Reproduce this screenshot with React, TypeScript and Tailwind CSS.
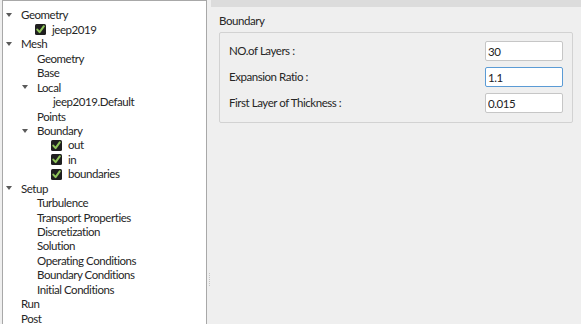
import React from "react";

type Row = {
  label: string;
  level: number;
  arrow?: boolean;
  checked?: boolean;
};

const rows: Row[] = [
  { label: "Geometry", level: 0, arrow: true },
  { label: "jeep2019", level: 1, checked: true },
  { label: "Mesh", level: 0, arrow: true },
  { label: "Geometry", level: 1 },
  { label: "Base", level: 1 },
  { label: "Local", level: 1, arrow: true },
  { label: "jeep2019.Default", level: 2 },
  { label: "Points", level: 1 },
  { label: "Boundary", level: 1, arrow: true },
  { label: "out", level: 2, checked: true },
  { label: "in", level: 2, checked: true },
  { label: "boundaries", level: 2, checked: true },
  { label: "Setup", level: 0, arrow: true },
  { label: "Turbulence", level: 1 },
  { label: "Transport Properties", level: 1 },
  { label: "Discretization", level: 1 },
  { label: "Solution", level: 1 },
  { label: "Operating Conditions", level: 1 },
  { label: "Boundary Conditions", level: 1 },
  { label: "Initial Conditions", level: 1 },
  { label: "Run", level: 0 },
  { label: "Post", level: 0 },
];

const indent = ["w-0", "w-[16px]", "w-[32px]"];

function CheckIcon() {
  return (
    <svg width="11" height="11" viewBox="0 0 11 11" className="shrink-0">
      <rect x="0" y="0" width="11" height="11" rx="1.5" fill="#1f1f1f" />
      <path d="M2.3 5.6 L4.6 8.1 L8.9 2.2" fill="none" stroke="#8fc55a" strokeWidth="2" strokeLinecap="round" strokeLinejoin="round" />
    </svg>
  );
}

function Arrow() {
  return (
    <svg width="6" height="4" viewBox="0 0 6 4">
      <path d="M0 0 L6 0 L3 4 Z" fill="#5a5a5a" />
    </svg>
  );
}

function TreeRow({ row }: { row: Row }) {
  if (row.checked) {
    return (
      <div className="flex items-center h-[14.45px]">
        <div className={indent[row.level]} />
        <div className="w-[16px] shrink-0" />
        <CheckIcon />
        <span className="ml-[6px]">{row.label}</span>
      </div>
    );
  }
  return (
    <div className="flex items-center h-[14.45px]">
      <div className={indent[row.level]} />
      <div className="w-[18px] shrink-0 flex items-center pl-[3px]">{row.arrow && <Arrow />}</div>
      <span>{row.label}</span>
    </div>
  );
}

function Field({ label, value, focused }: { label: string; value: string; focused?: boolean }) {
  return (
    <div className="flex items-center justify-between h-[20px]">
      <span>{label}</span>
      <input
        readOnly
        value={value}
        className={
          focused
            ? "w-[78px] h-[20px] bg-white border border-[#5b9bd5] rounded-[2px] px-[2px] text-[#222] outline-none"
            : "w-[78px] h-[20px] bg-white border border-[#c6c6c6] rounded-[2px] px-[2px] text-[#222] outline-none"
        }
      />
    </div>
  );
}

export default function App() {
  return (
    <div
      className="w-[581px] h-[324px] bg-[#efefef] flex overflow-hidden text-[11.5px] tracking-[-0.45px] text-[#262626]"
      style={{ fontFamily: "Lato, 'Open Sans', sans-serif" }}
    >
      <div className="w-[207px] flex flex-col shrink-0">
        <div className="h-[7px] bg-[#dcdcdc]" />
        <div className="flex-1 ml-[2px] bg-white border-l border-r border-t border-[#a8a8a8] pt-[7px] leading-none">
          {rows.map((r, i) => (
            <TreeRow key={i} row={r} />
          ))}
        </div>
      </div>
      <div className="w-[4px] shrink-0 flex flex-col items-center">
        <div className="h-[7px] w-full" />
        <div className="flex-1" />
        <div className="flex flex-col gap-[1px] mb-[38px] ml-[1px]">
          <div className="w-[1px] h-[1px] bg-[#c4c4c4]" />
          <div className="w-[1px] h-[1px] bg-[#c4c4c4]" />
          <div className="w-[1px] h-[1px] bg-[#c4c4c4]" />
          <div className="w-[1px] h-[1px] bg-[#c4c4c4]" />
          <div className="w-[1px] h-[1px] bg-[#c4c4c4]" />
          <div className="w-[1px] h-[1px] bg-[#c4c4c4]" />
          <div className="w-[1px] h-[1px] bg-[#c4c4c4]" />
        </div>
      </div>
      <div className="flex-1 flex flex-col">
        <div className="h-[7px] bg-[#dcdcdc]" />
        <div className="pl-[8px] pr-[8px] pt-[8px]">
          <div className="leading-none h-[14px]">Boundary</div>
          <div className="mt-[3px] border border-[#d2d2d2] rounded-[2px] pt-[8px] pb-[9px] pl-[9px] pr-[9px] flex flex-col gap-[6px]">
            <Field label="NO.of Layers :" value="30" />
            <Field label="Expansion Ratio :" value="1.1" focused />
            <Field label="First Layer of Thickness :" value="0.015" />
          </div>
        </div>
      </div>
    </div>
  );
}
